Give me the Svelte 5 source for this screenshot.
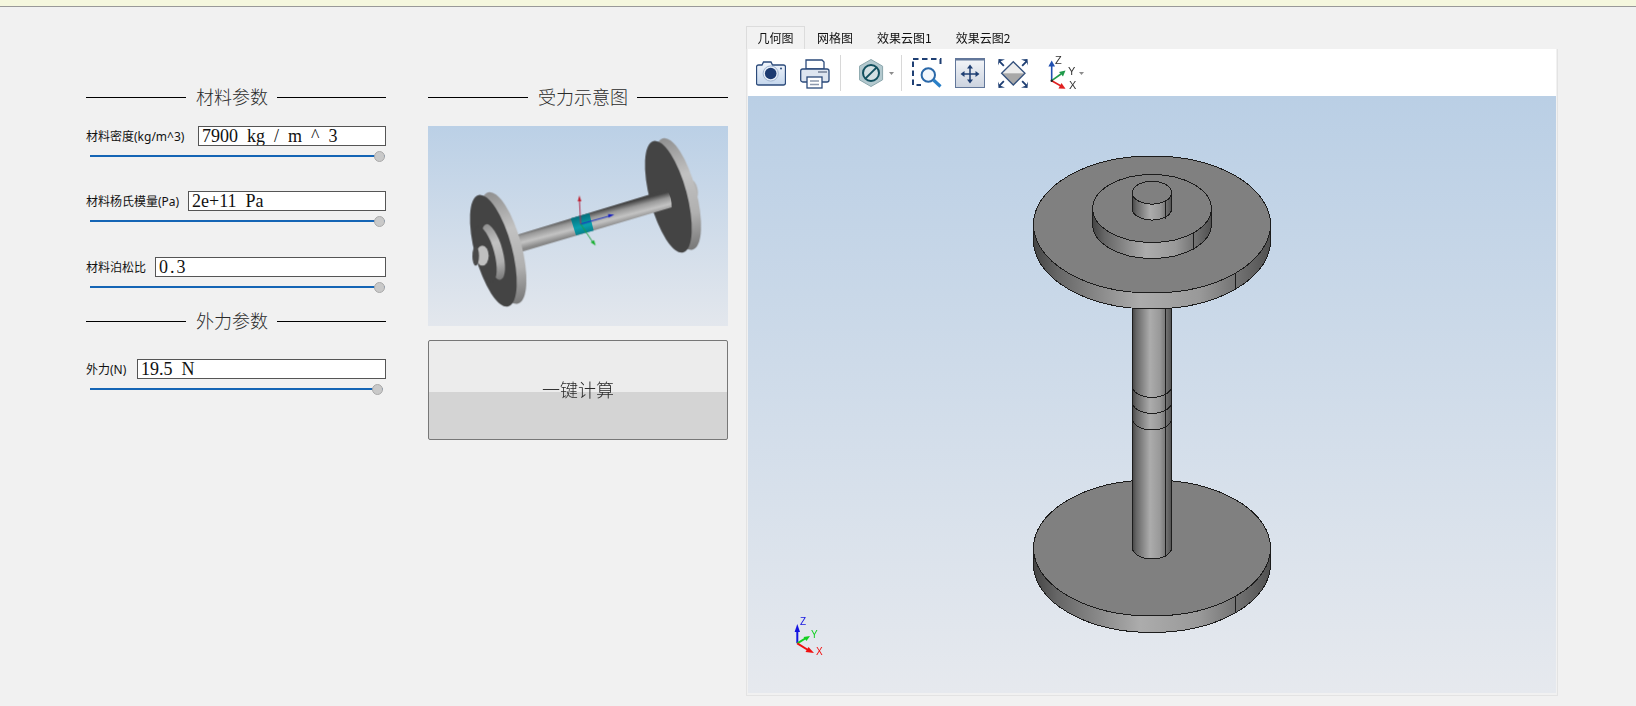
<script>
  const material = [
    { label: '材料密度(kg/m^3)', value: '7900 kg / m ^ 3', labelW: 112, cls: '' },
    { label: '材料杨氏模量(Pa)', value: '2e+11 Pa', labelW: 102, cls: '' },
    { label: '材料泊松比', value: '0.3', labelW: 69, cls: 'wide' }
  ];
  const tabs = ['几何图', '网格图', '效果云图1', '效果云图2'];

  // Cylinders drawn bottom-up in page coordinates: cx, cy of the top face, radii, height, seam x
  const cx = 1152;
  const topStack = [
    { rx: 118.5, ry: 68.5, cy: 224.5, h: 16, seam: 1235, seamY: 273 },
    { rx: 59.3, ry: 34, cy: 208.5, h: 16, seam: 1193.3, seamY: 233 },
    { rx: 19.7, ry: 11.4, cy: 192.7, h: 16, seam: 1165.7, seamY: 202 }
  ];
  const base = { rx: 118.5, ry: 68, cy: 548, h: 16.5, seam: 1235, seamY: 596 };
  const rings = [386, 402, 418.6];

  function side(c) {
    const l = cx - c.rx, r = cx + c.rx, b = c.cy + c.h;
    return `M${l} ${c.cy}V${b}A${c.rx} ${c.ry} 0 0 0 ${r} ${b}V${c.cy}A${c.rx} ${c.ry} 0 0 1 ${l} ${c.cy}Z`;
  }
</script>

<div class="page">
  <div class="notice"></div>
  <main class="main">
    <section class="col">
      <div class="title"><i class="lead"></i><span>材料参数</span><i class="rest"></i></div>
      {#each material as f, i}
        <div class="field" class:first={i === 0} class:loose={i === 2}>
          <div class="row">
            <span class="label" style="width:{f.labelW}px">{f.label}</span>
            <input class="text {f.cls}" value={f.value} />
          </div>
          <input class="slider" type="range" min="0" max="100" value="100" />
        </div>
      {/each}
      <div class="title second"><i class="lead"></i><span>外力参数</span><i class="rest"></i></div>
      <div class="field force">
        <div class="row">
          <span class="label" style="width:51px">外力(N)</span>
          <input class="text" value="19.5 N" />
        </div>
        <input class="slider short" type="range" min="0" max="100" value="100" />
      </div>
    </section>

    <section class="col mid">
      <div class="title"><i class="lead"></i><span>受力示意图</span><i class="rest"></i></div>
      <div class="thumb">
        <svg viewBox="24 18 900 600" width="300" height="200">
          <defs>
            <linearGradient id="tShaft" gradientUnits="userSpaceOnUse" x1="514" y1="276" x2="528" y2="330">
              <stop offset="0" stop-color="#444" />
              <stop offset=".3" stop-color="#999" />
              <stop offset=".65" stop-color="#c4c4c4" />
              <stop offset="1" stop-color="#888" />
            </linearGradient>
            <linearGradient id="tRim" x1="0" y1="0" x2="0" y2="1">
              <stop offset="0" stop-color="#909090" />
              <stop offset=".35" stop-color="#c2c2c2" />
              <stop offset=".7" stop-color="#b0b0b0" />
              <stop offset="1" stop-color="#787878" />
            </linearGradient>
            <linearGradient id="tTeal" gradientUnits="userSpaceOnUse" x1="480" y1="287" x2="494" y2="340">
              <stop offset="0" stop-color="#04707c" />
              <stop offset=".6" stop-color="#0aa0ae" />
              <stop offset="1" stop-color="#087f8c" />
            </linearGradient>
          </defs>
          <g class="soft">
            <ellipse cx="820" cy="209" rx="13" ry="29" transform="rotate(-12 820 209)" fill="#b5b5b5" />
            <ellipse cx="773" cy="222" rx="56" ry="173" transform="rotate(-15 773 222)" fill="url(#tRim)" />
            <ellipse cx="745" cy="230" rx="56" ry="173" transform="rotate(-15 745 230)" fill="#444" />
            <path d="M288 345 740 208Q756 232 755 262L300 397Z" fill="url(#tShaft)" />
            <path d="M452 295 508 279 521 332 468 346Z" fill="url(#tTeal)" />
            <ellipse cx="249" cy="384" rx="56" ry="173" transform="rotate(-15 249 384)" fill="url(#tRim)" />
            <ellipse cx="220" cy="392" rx="56" ry="173" transform="rotate(-15 220 392)" fill="#444" />
            <ellipse cx="220" cy="396" rx="28" ry="86" transform="rotate(-15 220 396)" fill="url(#tRim)" />
            <ellipse cx="195" cy="402" rx="28" ry="86" transform="rotate(-15 195 402)" fill="#444" />
            <ellipse cx="187" cy="407" rx="19" ry="30" fill="#c0c0c0" />
            <ellipse cx="167" cy="408" rx="10" ry="29" fill="#4a4a4a" />
            <path d="M482 312 478 236" stroke="#b03050" stroke-width="3" fill="none" />
            <path d="M478 226 484 244 473 244Z" fill="#c02030" />
            <path d="M482 312 568 288" stroke="#1c30c0" stroke-width="3" fill="none" />
            <path d="M583 284 566 293 564 282Z" fill="#1820c0" />
            <path d="M482 312 518 366" stroke="#20a040" stroke-width="3" fill="none" />
            <path d="M527 377 512 367 522 360Z" fill="#18b030" />
          </g>
        </svg>
      </div>
      <button class="run">一键计算</button>
    </section>

    <section class="right">
      <nav class="tabs">
        {#each tabs as t, i}
          <span class="tab" class:active={i === 0}>{t}</span>
        {/each}
      </nav>
      <div class="panel">
        <div class="toolbar">
          <svg class="ico camera" width="30" height="32" viewBox="0 0 30 32">
            <defs>
              <linearGradient id="camB" x1="0" y1="0" x2="0" y2="1"><stop offset="0" stop-color="#f2f6fc" /><stop offset="1" stop-color="#c4d6ec" /></linearGradient>
            </defs>
            <path d="M2.5 8H6L7.5 5H15L16.5 8H27.5Q29.5 8 29.5 10V26Q29.5 28 27.5 28H2.5Q.5 28 .5 26V10Q.5 8 2.5 8Z" fill="url(#camB)" stroke="#2b4a7a" stroke-width="1.3" />
            <circle cx="14.7" cy="16.5" r="7.6" fill="#e8eef7" stroke="#9fb4d0" />
            <circle cx="14.7" cy="16.5" r="5.8" fill="#1c3a70" />
            <circle cx="25" cy="11.5" r="1" fill="#2b4a7a" />
          </svg>
          <svg class="ico printer" width="30" height="32" viewBox="0 0 30 32">
            <path d="M6 12V3H22L24 5V12Z" fill="#fff" stroke="#2b4a7a" stroke-width="1.3" />
            <rect x=".7" y="12" width="28.3" height="13" rx="2" fill="#dde5f0" stroke="#2b4a7a" stroke-width="1.3" />
            <rect x="18" y="14" width="9" height="2" fill="#8d99ad" />
            <rect x="7" y="20" width="15" height="11" fill="#fff" stroke="#2b4a7a" stroke-width="1.3" />
            <path d="M10 24H19M10 27.5H19" stroke="#8d99ad" stroke-width="1.3" />
          </svg>
          <i class="sep one"></i>
          <svg class="ico hex" width="36" height="32" viewBox="0 0 36 32">
            <path d="M12 2.5 23.6 9.2V22.8L12 29.5 .4 22.8V9.2Z" fill="#b3c9cf" stroke="#8aa6ac" />
            <circle cx="12" cy="16" r="8" fill="#d4e0e3" stroke="#12505f" stroke-width="2" />
            <path d="M6.6 21.4 17.4 10.6" stroke="#12505f" stroke-width="2" />
            <path d="M30 15H35L32.5 18Z" fill="#8c8c8c" />
          </svg>
          <i class="sep two"></i>
          <svg class="ico zoom" width="30" height="32" viewBox="0 0 30 32">
            <rect x="1" y="2" width="27.5" height="26" fill="none" stroke="#1f3f73" stroke-width="2" stroke-dasharray="5.5 3.5" />
            <rect x="9" y="10" width="22" height="22" fill="#fff" />
            <circle cx="16.3" cy="18" r="6.7" fill="#f3f8fd" stroke="#2a68a8" stroke-width="2" />
            <path d="M21.5 23 28.5 29.5" stroke="#2a80c8" stroke-width="3.2" />
          </svg>
          <svg class="ico fit" width="30" height="32" viewBox="0 0 30 32">
            <defs>
              <linearGradient id="fitB" x1="0" y1="0" x2="0" y2="1"><stop offset="0" stop-color="#f4f6f9" /><stop offset="1" stop-color="#ccd3df" /></linearGradient>
            </defs>
            <rect x=".5" y="1.5" width="29" height="29" fill="url(#fitB)" stroke="#62779a" />
            <rect x=".5" y="1.5" width="29" height="2" fill="#62779a" />
            <path d="M15 9V25M7 17H23" stroke="#1f3f73" stroke-width="1.5" />
            <path d="M15 7.5 18 11.5H12ZM15 26.5 12 22.5H18ZM5.5 17 9.5 14V20ZM24.5 17 20.5 20V14Z" fill="#1f3f73" />
          </svg>
          <svg class="ico dia" width="30" height="32" viewBox="0 0 30 32">
            <path d="M15.3 4.7 27 16.3H3.6Z" fill="#ececec" />
            <path d="M3.6 16.3H27L15.3 28Z" fill="#a8a8a8" />
            <path d="M15.3 4.7 27 16.3 15.3 28 3.6 16.3Z" fill="none" stroke="#33507c" stroke-width="1.3" />
            <path d="M.5 2 7 2.5 2.6 4.3 6.5 8.2 5.2 9.5 1.3 5.6 0 8.5Z" fill="#1f3f73" />
            <path d="M29.5 2 23 2.5 27.4 4.3 23.5 8.2 24.8 9.5 28.7 5.6 30 8.5Z" fill="#1f3f73" />
            <path d="M.5 31 7 30.5 2.6 28.7 6.5 24.8 5.2 23.5 1.3 27.4 0 24.5Z" fill="#1f3f73" />
            <path d="M29.5 31 23 30.5 27.4 28.7 23.5 24.8 24.8 23.5 28.7 27.4 30 24.5Z" fill="#1f3f73" />
          </svg>
          <svg class="ico axes" width="37" height="36" viewBox="0 0 37 36">
            <path d="M3.7 25.7V9" stroke="#1f4fb0" stroke-width="1.6" />
            <path d="M3.7 5.5 7 11.5H.4Z" fill="#1f4fb0" />
            <path d="M3.7 25.7 13 19" stroke="#1f9a4a" stroke-width="1.6" />
            <path d="M17.5 15.5 15 21.5 11 17Z" fill="#1f9a4a" />
            <path d="M3.7 25.7 13 31" stroke="#e02020" stroke-width="1.6" />
            <path d="M17.5 33.8 10.5 33.5 13.5 28Z" fill="#e02020" />
            <circle cx="3.7" cy="25.7" r="1.2" fill="#222" />
            <text x="7" y="9" class="axt">Z</text>
            <text x="20" y="20" class="axt">Y</text>
            <text x="21" y="34" class="axt">X</text>
            <path d="M31 17H36L33.5 20Z" fill="#8c8c8c" />
          </svg>
        </div>
        <div class="viewer">
          <svg viewBox="748 96 808 597" width="808" height="597">
            <defs>
              <linearGradient id="mSide" x1="0" y1="0" x2="1" y2="0">
                <stop offset="0" stop-color="#444" />
                <stop offset=".1" stop-color="#666" />
                <stop offset=".45" stop-color="#acacac" />
                <stop offset=".7" stop-color="#999" />
                <stop offset="1" stop-color="#505050" />
              </linearGradient>
            </defs>
            <g class="model">
              <path d={side(base)} fill="url(#mSide)" stroke="#1c1c1c" />
              <line x1={base.seam} x2={base.seam} y1={base.seamY} y2={base.seamY + 16.5} stroke="#1c1c1c" />
              <ellipse cx={cx} cy={base.cy} rx={base.rx} ry={base.ry} fill="#808080" stroke="#1c1c1c" />
              <path d="M1132.3 300V547.6A19.7 11.4 0 0 0 1171.7 547.6V300Z" fill="url(#mSide)" stroke="#1c1c1c" />
              {#each rings as y}
                <path d="M1132.3 {y}A19.7 11.4 0 0 0 1171.7 {y}" fill="none" stroke="#1c1c1c" />
              {/each}
              <line x1="1165.7" x2="1165.7" y1="300" y2="557" stroke="#1c1c1c" />
              {#each topStack as c}
                <path d={side(c)} fill="url(#mSide)" stroke="#1c1c1c" />
                <line x1={c.seam} x2={c.seam} y1={c.seamY} y2={c.seamY + 16.5} stroke="#1c1c1c" />
                <ellipse cx={cx} cy={c.cy} rx={c.rx} ry={c.ry} fill="#808080" stroke="#1c1c1c" />
              {/each}
            </g>
            <path d="M797.3 643.3V629" stroke="#1414e0" stroke-width="2" />
            <path d="M797.3 624 800 632H794.6Z" fill="#1414e0" />
            <path d="M797.3 643.3 806 638" stroke="#10d020" stroke-width="2" />
            <path d="M810 636 806.5 641 803.5 637Z" fill="#10d020" />
            <path d="M797.3 643.3 808 650" stroke="#f01010" stroke-width="2" />
            <path d="M814 653 805.5 652 808.5 647Z" fill="#f01010" />
            <text x="800" y="624.5" class="tz">Z</text>
            <text x="811" y="638" class="ty">Y</text>
            <text x="816" y="654.5" class="tx">X</text>
          </svg>
        </div>
      </div>
    </section>
  </main>
</div>

<style>
  :global(body) {
    margin: 0;
    background: #f1f1f1;
  }
  .page {
    width: 1636px;
    height: 706px;
    overflow: hidden;
    background: #f1f1f1;
    font-family: "Noto Sans", "Noto Sans CJK SC", sans-serif;
    color: #111;
  }
  .notice {
    height: 6px;
    background: #f5f7de;
    border-bottom: 1px solid #999;
  }
  .main {
    display: flex;
    padding-left: 86px;
  }
  .col {
    width: 300px;
    padding-top: 77px;
  }
  .mid {
    margin-left: 42px;
  }
  .title {
    display: flex;
    align-items: center;
    height: 26px;
    font-family: "Noto Sans CJK SC", sans-serif;
    font-size: 18px;
    font-weight: 300;
    color: #2a2a2a;
  }
  .title span {
    margin: 0 9px 0 10px;
    padding-bottom: 3px;
    white-space: nowrap;
  }
  .title i {
    height: 1px;
    background: #000;
  }
  .lead {
    width: 100px;
  }
  .rest {
    flex: 1;
  }
  .second {
    margin-top: 15px;
  }
  .field {
    display: flex;
    flex-direction: column;
    margin-top: 29px;
  }
  .field.first {
    margin-top: 16px;
  }
  .field.loose {
    margin-top: 30px;
  }
  .field.force {
    margin-top: 25px;
  }
  .row {
    display: flex;
    align-items: center;
    height: 20px;
  }
  .label {
    flex: none;
    font-size: 12px;
    line-height: 16px;
    white-space: nowrap;
    margin-top: 1px;
  }
  .text {
    flex: 1;
    min-width: 0;
    height: 20px;
    box-sizing: border-box;
    margin: 0;
    padding: 0 3px;
    border: 1px solid #555;
    border-radius: 0;
    outline: none;
    background: #fff;
    color: #111;
    font-family: "Liberation Serif", serif;
    font-size: 18px;
    word-spacing: 4.5px;
  }
  .text.wide {
    letter-spacing: 2px;
  }
  .slider {
    -webkit-appearance: none;
    appearance: none;
    display: block;
    width: 295px;
    height: 10px;
    margin: 5px 0 1px 4px;
    padding: 0;
    background: transparent;
  }
  .slider.short {
    width: 293px;
  }
  .slider::-webkit-slider-runnable-track {
    height: 2px;
    background: #1565b5;
  }
  .slider::-webkit-slider-thumb {
    -webkit-appearance: none;
    width: 11px;
    height: 11px;
    margin-top: -4px;
    border-radius: 50%;
    box-sizing: border-box;
    border: 1px solid #aaa;
    background: #c9c9c9;
  }
  .thumb {
    height: 200px;
    margin-top: 16px;
    background: linear-gradient(#bbd0e6, #e3e7ed);
  }
  .thumb svg {
    display: block;
  }
  .soft {
    filter: blur(0.5px);
  }
  .run {
    display: block;
    width: 100%;
    height: 100px;
    margin-top: 14px;
    padding: 0 0 2px;
    box-sizing: border-box;
    border: 1px solid #777;
    border-radius: 2px;
    background: linear-gradient(#ececec 0 52.5%, #d4d4d4 52.5% 100%);
    color: #2a2a2a;
    font-family: "Noto Sans CJK SC", sans-serif;
    font-size: 18px;
    font-weight: 300;
  }
  .right {
    margin-left: 18px;
    padding-top: 19px;
  }
  .tabs {
    display: flex;
    height: 23px;
    font-family: "Noto Sans CJK SC", sans-serif;
    font-size: 12px;
    color: #111;
  }
  .tab {
    box-sizing: border-box;
    height: 23px;
    padding: 0 12px;
    line-height: 21px;
    white-space: nowrap;
    border-top: 1px solid transparent;
  }
  .tab.active {
    padding: 0 10.5px;
    border: 1px solid #dcdcdc;
    border-bottom: none;
    background: #f2f2f2;
  }
  .panel {
    width: 812px;
    box-sizing: border-box;
    padding: 0 1px 2px;
    border: 1px solid #e3e3e3;
    border-top: none;
  }
  .toolbar {
    display: flex;
    align-items: center;
    height: 47px;
    box-sizing: border-box;
    padding: 1px 0 0 8px;
    background: #fff;
  }
  .ico {
    display: block;
    flex: none;
  }
  .printer {
    margin-left: 14px;
  }
  .sep {
    flex: none;
    width: 1px;
    height: 36px;
    background: #d8d8d8;
  }
  .sep.one {
    margin-left: 10px;
  }
  .hex {
    margin-left: 18px;
  }
  .sep.two {
    margin-left: 6px;
  }
  .zoom {
    margin-left: 10px;
  }
  .fit,
  .dia {
    margin-left: 13px;
  }
  .axes {
    margin-left: 20px;
  }
  .axt {
    font-family: "Liberation Sans", sans-serif;
    font-size: 11px;
    fill: #333;
  }
  .viewer {
    height: 597px;
    background: linear-gradient(#bacfe5, #e6e9ee);
  }
  .viewer svg {
    display: block;
  }
  .model {
    shape-rendering: crispEdges;
  }
  .tz,
  .ty,
  .tx {
    font-family: "Liberation Sans", sans-serif;
    font-size: 10px;
  }
  .tz {
    fill: #1414e0;
  }
  .ty {
    fill: #10d020;
  }
  .tx {
    fill: #f01010;
  }
</style>
